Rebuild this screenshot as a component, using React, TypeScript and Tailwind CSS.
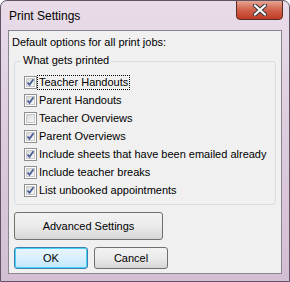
import React from "react";

const items: [string, boolean][] = [
  ["Teacher Handouts", true],
  ["Parent Handouts", true],
  ["Teacher Overviews", false],
  ["Parent Overviews", true],
  ["Include sheets that have been emailed already", true],
  ["Include teacher breaks", true],
  ["List unbooked appointments", true],
];

function Check({ checked }: { checked: boolean }) {
  return (
    <div className="w-[13px] h-[13px] border border-[#8f8f8f] bg-white p-[1px] shrink-0">
      <div className="w-full h-full border border-[#c9c9c9] bg-gradient-to-br from-[#d8d8d8] to-[#f8f8f8] relative">
        {checked && (
          <svg className="absolute left-[-1px] top-[-1px]" width="9" height="9" viewBox="0 0 9 9">
            <path d="M1.5 4.5 L3.5 6.8 L7.5 1.2" fill="none" stroke="#4a5f97" strokeWidth="1.8" />
          </svg>
        )}
      </div>
    </div>
  );
}

export default function App() {
  return (
    <div
      className="w-[290px] h-[282px] relative rounded-t-[7px] border border-[#5e5466] bg-gradient-to-b from-[#e9dce9] via-[#dccbdc] to-[#d3bfd3] pt-[29px] px-[7px] pb-[7px] overflow-hidden"
      style={{ fontFamily: '"Liberation Sans", Arial, sans-serif' }}
    >
      <div className="absolute left-[8px] top-[8px] text-[12px] leading-[15px] text-black">Print Settings</div>
      <div className="absolute left-[235px] top-[-1px] w-[47px] h-[20px] rounded-b-[4px] border border-[#5a2a25] bg-gradient-to-b from-[#e5a592] via-[#d1604a] to-[#c03a22] flex items-center justify-center">
        <svg width="16" height="12" viewBox="0 0 16 12">
          <path d="M3 1.5 L13 10.5 M13 1.5 L3 10.5" stroke="#3d3a44" strokeWidth="4.2" strokeLinecap="round" />
          <path d="M3 1.5 L13 10.5 M13 1.5 L3 10.5" stroke="#ffffff" strokeWidth="2.2" strokeLinecap="round" />
        </svg>
      </div>
      <div className="w-[274px] h-[244px] border border-[#8a8591] bg-[#f0f0f0] flex flex-col pl-[3px] text-[11px] text-black leading-[14px] whitespace-nowrap">
        <div className="mt-[4px]">Default options for all print jobs:</div>
        <div className="relative ml-[2px] mt-[12px] w-[262px] h-[144px] border border-[#d5dfe5] rounded-[3px] pt-[14px] pl-[9px]">
          <div className="absolute left-[6px] top-[-9px] bg-[#f0f0f0] px-[2px]">What gets printed</div>
          <div className="flex flex-col gap-[5px]">
            {items.map(([label, checked], i) => (
              <div key={i} className="flex items-center h-[13px] gap-[1px]">
                <Check checked={checked} />
                <span className={i === 0 ? "outline outline-1 outline-dotted outline-black px-[1px] leading-[13px]" : "px-[1px] leading-[13px]"}>{label}</span>
              </div>
            ))}
          </div>
        </div>
        <button className="ml-[2px] mt-[7px] w-[149px] h-[28px] border border-[#707070] rounded-[3px] bg-gradient-to-b from-[#f2f2f2] via-[#ebebeb] to-[#d6d6d6]">
          Advanced Settings
        </button>
        <div className="flex gap-[6px] ml-[2px] mt-[7px]">
          <button className="w-[74px] h-[22px] border border-[#3c7fb1] rounded-[3px] bg-gradient-to-b from-[#eaf6fd] via-[#d9f0fc] to-[#bee6fd] shadow-[inset_0_0_0_1px_#48d2f8]">
            OK
          </button>
          <button className="w-[74px] h-[22px] border border-[#707070] rounded-[3px] bg-gradient-to-b from-[#f2f2f2] via-[#ebebeb] to-[#d6d6d6]">
            Cancel
          </button>
        </div>
      </div>
    </div>
  );
}
